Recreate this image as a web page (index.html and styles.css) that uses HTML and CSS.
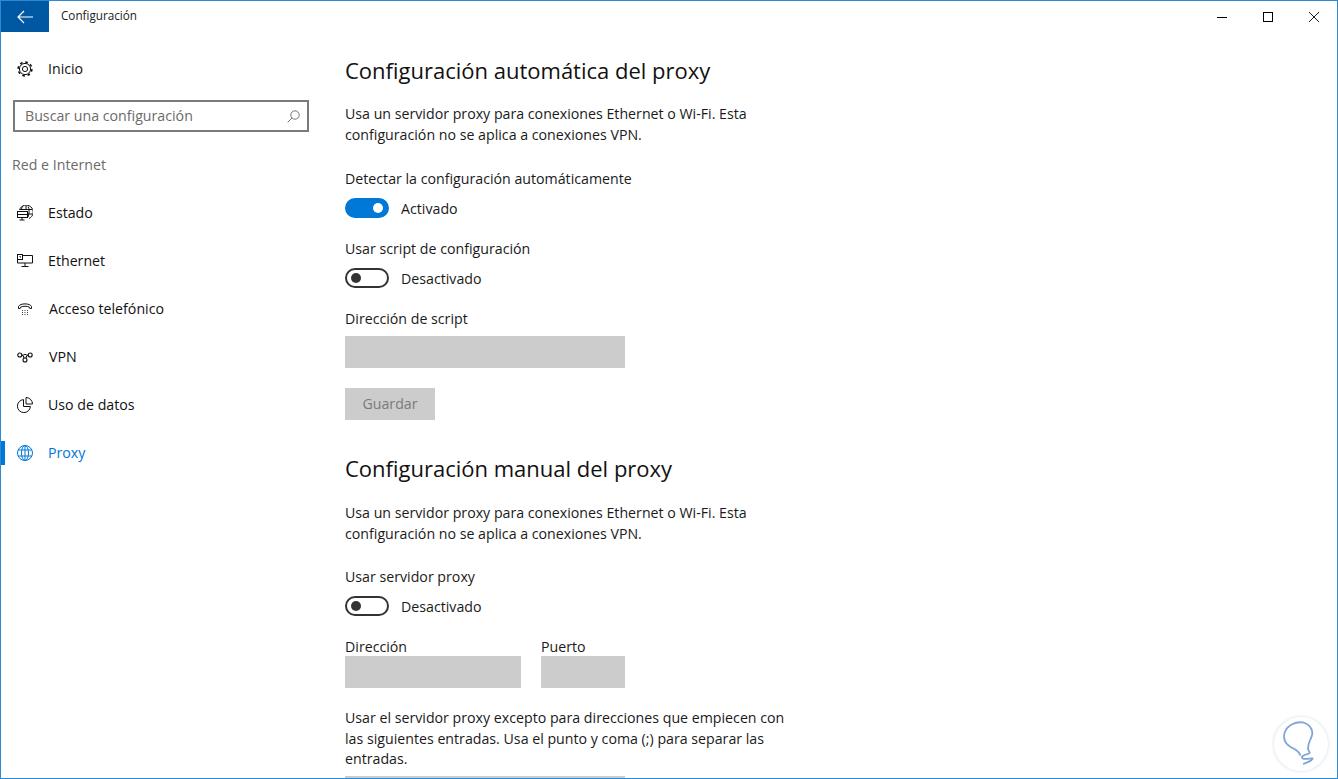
FILE: index.html
```html
<!DOCTYPE html>
<html>
<head>
<meta http-equiv="Content-Type" content="text/html; charset=utf-8" />
<title>Configuración</title>
<link rel="stylesheet" href="styles.css">
</head>
<body>
<div class="window">
	<div class="titlebar">
		<a href="javascript:;" class="back">
			<svg width="16" height="14" viewBox="0 0 16 14"><path d="M7 1 1 7l6 6M1 7h15" fill="none" stroke="#fff" stroke-width="1.2"/></svg>
		</a>
		<span class="title">Configuración</span>
		<div class="controls">
			<a href="javascript:;" class="ctl"><svg width="10" height="10" viewBox="0 0 10 10"><path d="M0 5.5h10" stroke="#000"/></svg></a>
			<a href="javascript:;" class="ctl"><svg width="10" height="10" viewBox="0 0 10 10"><rect x=".5" y=".5" width="9" height="9" fill="none" stroke="#000"/></svg></a>
			<a href="javascript:;" class="ctl"><svg width="10" height="10" viewBox="0 0 10 10"><path d="M0 0l10 10M10 0 0 10" stroke="#000" stroke-width=".9"/></svg></a>
		</div>
	</div>
	<div class="body">
		<div class="side">
			<a href="javascript:;" class="item">
				<svg class="ico" width="16" height="16" viewBox="0 0 16 16" fill="none" stroke="#111"><circle cx="8" cy="8" r="2.6"/><circle cx="8" cy="8" r="5.6"/><circle cx="8" cy="8" r="6.9" stroke-width="1.5" stroke-dasharray="2.7 2.72"/></svg>
				<span>Inicio</span>
			</a>
			<div class="search">
				<span>Buscar una configuración</span>
				<svg width="13" height="13" viewBox="0 0 13 13" fill="none" stroke="#777"><circle cx="8" cy="5" r="4.2"/><path d="M5 8 .7 12.3"/></svg>
			</div>
			<div class="group">Red e Internet</div>
			<a href="javascript:;" class="item">
				<svg class="ico" width="16" height="16" viewBox="0 0 16 16" fill="none" stroke="#111"><path d="M2.500 5A7 7 0 1 1 12 13.500M6 1C5 2 4.500 3.500 4.500 5M11 1.500C12.500 4 12.500 8 11 12M9 .5V5M3 4.500h12M11 9h4.500"/><rect x=".5" y="6.500" width="10" height="6" fill="#fff"/><path d="M.5 9.500h10M5 12.500v2.500M2.500 15h5"/></svg>
				<span>Estado</span>
			</a>
			<a href="javascript:;" class="item">
				<svg class="ico" width="16" height="14" viewBox="0 0 16 14" fill="none" stroke="#111"><path d="M5.500 1.500h10v7.500H.5V6M8 9v3.500M4.500 12.500h7"/><rect x=".5" y=".5" width="5" height="5"/><path d="M2.500 2.500h1v1"/></svg>
				<span>Ethernet</span>
			</a>
			<a href="javascript:;" class="item item-b">
				<svg class="ico" width="16" height="14" viewBox="0 0 16 14" fill="none" stroke="#111"><path d="M3 6.500H1.500V4.500C3 1 13 1 14.500 4.500v2H13c-.5 0-.8-.5-.8-1.500-2-1-6.400-1-8.400 0 0 1-.3 1.500-.8 1.500z"/><path d="M5 8.500h1M7.500 8.500h1M10 8.500h1M5 10.500h1M7.500 10.500h1M10 10.500h1M5 12.500h1M7.500 12.500h1M10 12.500h1" stroke="#444"/></svg>
				<span>Acceso telefónico</span>
			</a>
			<a href="javascript:;" class="item item-b">
				<svg class="ico" width="16" height="11" viewBox="0 0 16 11" fill="none" stroke="#111" stroke-width="1.100"><circle cx="2.800" cy="3" r="2"/><circle cx="13.200" cy="3" r="2"/><circle cx="8" cy="8" r="2"/><path d="M4.800 3C6.300 3 6.800 4.500 7 6.200M11.200 3C9.700 3 9.200 4.500 9 6.200M6.500 2.500h3"/></svg>
				<span>VPN</span>
			</a>
			<a href="javascript:;" class="item">
				<svg class="ico" width="16" height="16" viewBox="0 0 16 16" fill="none" stroke="#111"><path d="M6.500 2.600A6.500 6.500 0 1 0 13.400 9.500H6.500z"/><path d="M9 .5a6.500 6.500 0 0 1 6.500 6.500H9z"/></svg>
				<span>Uso de datos</span>
			</a>
			<a href="javascript:;" class="item active">
				<svg class="ico" width="16" height="16" viewBox="0 0 16 16" fill="none" stroke="#0078d7"><circle cx="8" cy="8" r="7.500"/><ellipse cx="8" cy="8" rx="3.500" ry="7.500"/><path d="M8 .5v15M1.300 5h13.400M1.300 11h13.400"/></svg>
				<span>Proxy</span>
			</a>
		</div>
		<div class="main">
			<h2 class="head">Configuración automática del proxy</h2>
			<p class="para">Usa un servidor proxy para conexiones Ethernet o Wi-Fi. Esta<br>configuración no se aplica a conexiones VPN.</p>
			<div class="label first">Detectar la configuración automáticamente</div>
			<div class="switch"><i class="knob on"></i><span>Activado</span></div>
			<div class="label">Usar script de configuración</div>
			<div class="switch"><i class="knob"></i><span>Desactivado</span></div>
			<div class="label">Dirección de script</div>
			<div class="field f-script"></div>
			<div class="btn">Guardar</div>
			<h2 class="head head2">Configuración manual del proxy</h2>
			<p class="para para2">Usa un servidor proxy para conexiones Ethernet o Wi-Fi. Esta<br>configuración no se aplica a conexiones VPN.</p>
			<div class="label label2">Usar servidor proxy</div>
			<div class="switch"><i class="knob"></i><span>Desactivado</span></div>
			<div class="pair">
				<div class="col">
					<div class="label-s">Dirección</div>
					<div class="field f-addr"></div>
				</div>
				<div class="col">
					<div class="label-s">Puerto</div>
					<div class="field f-port"></div>
				</div>
			</div>
			<p class="para para3">Usar el servidor proxy excepto para direcciones que empiecen con<br>las siguientes entradas. Usa el punto y coma (;) para separar las<br>entradas.</p>
			<div class="field f-last"></div>
		</div>
	</div>
	<div class="mark">
		<svg width="60" height="60" viewBox="-1 4 60 60" fill="none" stroke="#7fa6d6" stroke-width="2" stroke-linecap="round"><path d="M28 46C26 41 22 40 17 37 11 33 9 27 11 21 14 13 23 9 31 10 39 12 43 19 41 25 39 31 36 34 37 40 38 43 40 44 37 45 33 46 28 48 31 50 34 52 41 49 42 50 41 53 35 55 32 56"/></svg>
	</div>
</div>
</body>
</html>
```

FILE: styles.css
```css
* {padding:0; margin:0; box-sizing:border-box;}
html, body {height:100%; overflow:hidden; background:#fff;}
body {font-family:"Open Sans", "Liberation Sans", sans-serif; font-size:14.2px; color:#1a1a1a;}
a {color:inherit; text-decoration:none;}

.window {position:relative; width:1338px; height:779px; border:1px solid #2b8ad8; overflow:hidden; display:flex; flex-direction:column;}

.titlebar {height:31px; flex:none; display:flex; align-items:center;}
.back {width:48px; height:31px; background:#0058a3; display:flex; align-items:center; justify-content:center;}
.title {margin:0 0 3px 12px; font-size:11.7px; color:#222;}
.controls {margin-left:auto; display:flex;}
.ctl {width:46px; height:31px; display:flex; align-items:center; justify-content:center;}

.body {flex:1; display:flex; min-height:0;}

.side {width:344px; flex:none; padding-top:13px;}
.item {position:relative; height:48px; padding-left:16px; display:flex; align-items:center; color:#111;}
.item .ico {flex:none;}
.item span {margin:0 0 2px 15px;}
.item-b span {margin-left:16px;}
.active {color:#0078d7;}
.active::before {content:""; position:absolute; left:0; top:12px; width:4px; height:24px; background:#0078d7;}

.search {width:296px; height:32px; margin:7px 0 0 12px; border:2px solid #7a7a7a; padding:0 7px 0 10px; display:flex; align-items:center; justify-content:space-between; color:#6b6b6b;}
.search span {margin-bottom:2px;}
.group {height:26px; line-height:26px; margin:20px 0 11px 11px; color:#6b6b6b;}

.main {flex:1; padding-top:22px; min-width:0;}
.head {font-size:22px; font-weight:400; line-height:32px; color:#111;}
.head2 {margin-top:32px;}
.para {line-height:21px; margin-top:17px; color:#1a1a1a;}
.para2 {margin-top:18px;}
.label {line-height:21px; margin-top:20px;}
.label.first {margin-top:23px;}
.label2 {margin-top:22px;}
.label-s {height:20px; line-height:21px;}

.switch {height:20px; margin-top:9px; display:flex; align-items:center;}
.switch span {margin-left:12px;}
.knob {position:relative; display:block; width:44px; height:20px; border:2px solid #333; border-radius:10px; background:#fff;}
.knob::after {content:""; position:absolute; left:4px; top:3px; width:10px; height:10px; border-radius:50%; background:#333;}
.knob.on {background:#0078d7; border-color:#0078d7;}
.knob.on::after {left:auto; right:4px; background:#fff;}

.field {height:32px; background:#ccc;}
.f-script {width:280px; margin-top:7px;}
.f-addr {width:176px;}
.f-port {width:84px;}
.f-last {width:280px; margin-top:6.5px;}

.btn {width:90px; height:32px; margin-top:20px; background:#ccc; color:#7a7a7a; text-align:center; line-height:32px;}

.pair {display:flex; gap:20px; margin-top:20px;}
.para3 {margin-top:20px; line-height:20.5px;}

.mark {position:absolute; right:9px; bottom:7px; width:54px; height:54px; border-radius:50%; background:#fff; box-shadow:0 0 3px 1px #e3e9f2; display:flex; align-items:center; justify-content:center;}
```
